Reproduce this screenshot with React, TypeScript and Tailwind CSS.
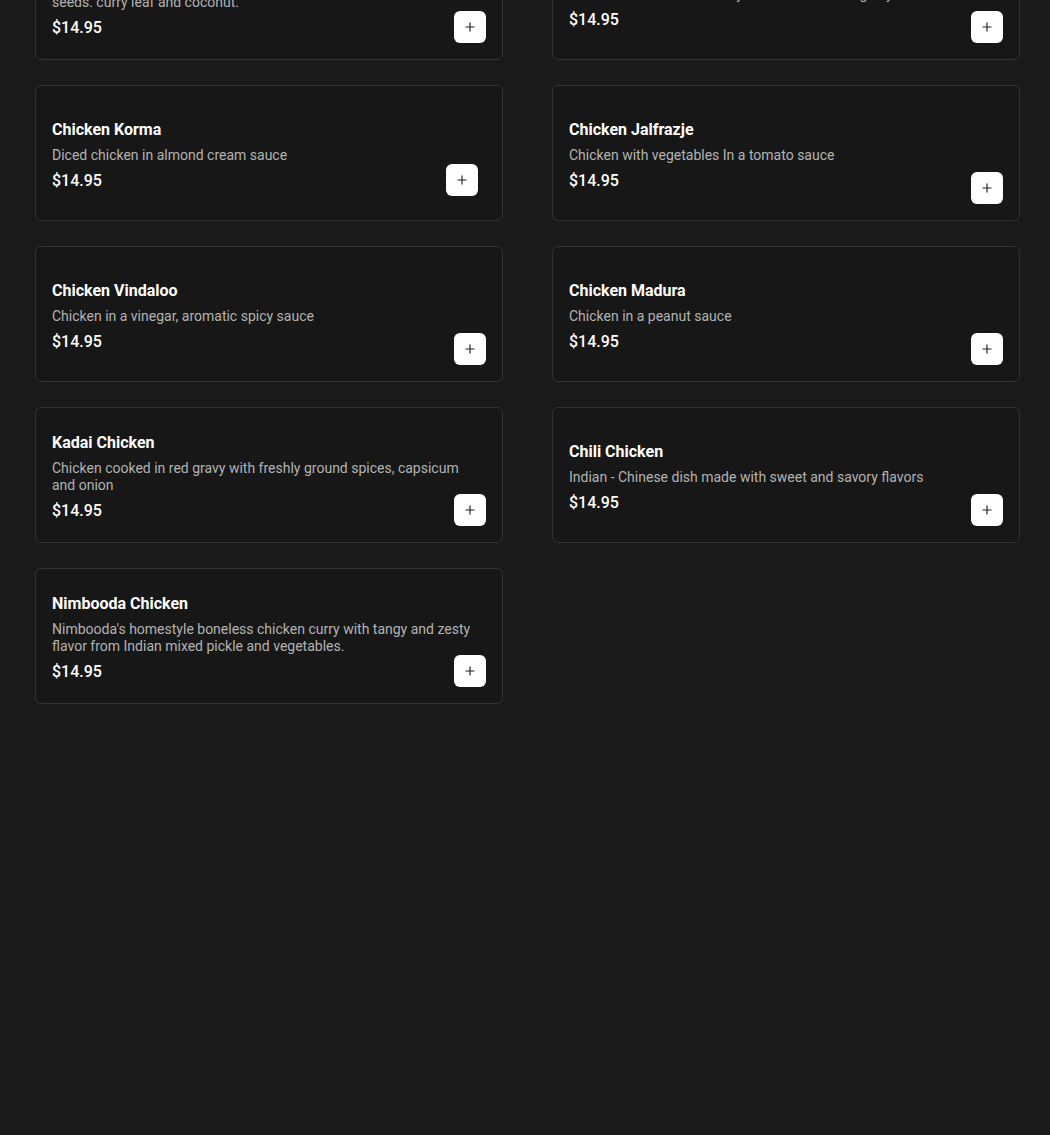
import { Plus } from "lucide-react";

interface Dish {
  name: string;
  desc: string;
  price: string;
  shifted?: boolean;
}

const dishes: Dish[] = [
  {
    name: "Chicken Chettinad",
    desc: "Chicken cooked in Chettinad style with roasted spices, mustard seeds. curry leaf and coconut.",
    price: "$14.95",
  },
  {
    name: "Chicken Tikka Masala",
    desc: "Chicken cooked in a creamy tomato and onion gravy",
    price: "$14.95",
  },
  { name: "Chicken Korma", desc: "Diced chicken in almond cream sauce", price: "$14.95", shifted: true },
  { name: "Chicken Jalfrazje", desc: "Chicken with vegetables In a tomato sauce", price: "$14.95" },
  { name: "Chicken Vindaloo", desc: "Chicken in a vinegar, aromatic spicy sauce", price: "$14.95" },
  { name: "Chicken Madura", desc: "Chicken in a peanut sauce", price: "$14.95" },
  {
    name: "Kadai Chicken",
    desc: "Chicken cooked in red gravy with freshly ground spices, capsicum and onion",
    price: "$14.95",
  },
  {
    name: "Chili Chicken",
    desc: "Indian - Chinese dish made with sweet and savory flavors",
    price: "$14.95",
  },
  {
    name: "Nimbooda Chicken",
    desc: "Nimbooda's homestyle boneless chicken curry with tangy and zesty flavor from Indian mixed pickle and vegetables.",
    price: "$14.95",
  },
];

function DishCard({ dish }: { dish: Dish }) {
  return (
    <div className="relative h-[136px] rounded-md border border-[#333333] bg-[#171717] pl-4 pr-[26px] pt-[18px] pb-[14px] flex flex-col justify-center">
      <h3 className="text-base leading-6 font-bold text-white">{dish.name}</h3>
      <p className="mt-[5px] text-sm leading-[17px] text-[#b3b3b3]">{dish.desc}</p>
      <p className="mt-[5px] text-base leading-6 font-medium text-white">{dish.price}</p>
      <button
        className={
          dish.shifted
            ? "absolute bottom-6 right-6 w-8 h-8 rounded-md bg-white flex items-center justify-center"
            : "absolute bottom-4 right-4 w-8 h-8 rounded-md bg-white flex items-center justify-center"
        }
      >
        <Plus size={14} strokeWidth={2} color="#222222" />
      </button>
    </div>
  );
}

export default function App() {
  return (
    <div
      className="min-h-screen overflow-hidden bg-[#1a1a1a]"
      style={{ fontFamily: "Roboto, 'Noto Sans', sans-serif" }}
    >
      {/* menu grid, page is scrolled a bit so top row is cut */}
      <div className="-mt-[76px] pl-[35px] pr-[30px] grid grid-cols-2 gap-x-[49px] gap-y-[25px]">
        {dishes.map((d) => (
          <DishCard key={d.name} dish={d} />
        ))}
      </div>
    </div>
  );
}
